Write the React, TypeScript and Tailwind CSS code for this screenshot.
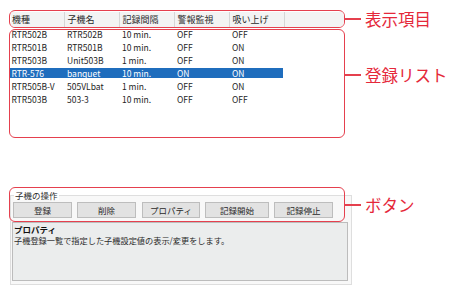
import React from "react";

const cols = ["機種", "子機名", "記録間隔", "警報監視", "吸い上げ"];
const rows = [
  ["RTR502B", "RTR502B", "10 min.", "OFF", "OFF"],
  ["RTR501B", "RTR501B", "10 min.", "OFF", "ON"],
  ["RTR503B", "Unit503B", "1 min.", "OFF", "ON"],
  ["RTR-576", "banquet", "10 min.", "ON", "ON"],
  ["RTR505B-V", "505VLbat", "1 min.", "OFF", "ON"],
  ["RTR503B", "503-3", "10 min.", "OFF", "OFF"],
];
const selected = 3;

const colCls = (i: number) =>
  i === 0 ? "w-[54px] pl-[1.5px]" : "w-[55px] pl-[3px]";

function Callout({ label }: { label: string }) {
  return (
    <div className="flex items-center h-[18px]">
      <div className="w-[16px] h-[1.5px] bg-[#e5404e]" />
      <span className="ml-[4px] text-[16.5px] leading-none text-[#e5283a] whitespace-nowrap">
        {label}
      </span>
    </div>
  );
}

const buttons: { label: string; cls: string }[] = [
  { label: "登録", cls: "w-[59px]" },
  { label: "削除", cls: "w-[59px] ml-[5px]" },
  { label: "プロパティ", cls: "w-[58px] ml-[6px]" },
  { label: "記録開始", cls: "w-[64px] ml-[5px]" },
  { label: "記録停止", cls: "w-[59px] ml-[5px]" },
];

export default function App() {
  return (
    <div className="relative w-[450px] h-[287px] bg-white overflow-hidden font-['Noto_Sans_CJK_JP',sans-serif] text-[#1e1e1e]">
      <div className="flex flex-col pl-[9px] pt-[10px]">
        {/* header */}
        <div className="flex items-center">
          <div className="w-[336px] h-[18px] border-[1.5px] border-[#e5404e] rounded-[6px] overflow-hidden p-[0.5px]">
            <div className="flex h-full w-[333px] bg-[#f3f3f3]">
              {cols.map((c, i) => (
                <div
                  key={c}
                  className={`${colCls(i)} shrink-0 border-r border-[#d6d6d6] flex items-center text-[9px] leading-none text-[#2a2a2a]`}
                >
                  {c}
                </div>
              ))}
              <div className="flex-1" />
            </div>
          </div>
          <Callout label="表示項目" />
        </div>

        {/* list */}
        <div className="flex items-start mt-[1px]">
          <div className="w-[336px] h-[109px] border-[1.5px] border-[#e5404e] rounded-[6px] overflow-hidden">
            <div className="flex flex-col gap-[3px] -mt-[1px]">
              {rows.map((r, ri) => (
                <div
                  key={ri}
                  className={`flex h-[10px] w-[273px] items-center ${
                    ri === selected ? "bg-[#1f6dbd] text-white" : ""
                  }`}
                >
                  {r.map((c, ci) => (
                    <div
                      key={ci}
                      className={`${colCls(ci)} shrink-0 text-[8.5px] leading-none whitespace-nowrap`}
                    >
                      {c}
                    </div>
                  ))}
                </div>
              ))}
            </div>
          </div>
          <div className="mt-[37px]">
            <Callout label="登録リスト" />
          </div>
        </div>

        {/* group box */}
        <div className="mt-[57px] ml-[1px] w-[342px] h-[90px] border border-[#dedede] bg-[#f8f8f8] flex flex-col">
          <div className="h-[10px] -mt-[6px] ml-[3px] px-[1px] w-fit bg-white text-[8.5px] leading-[10px] text-[#2a2a2a]">
            子機の操作
          </div>
          <div className="flex mt-[2px] ml-[2px]">
            {buttons.map((b) => (
              <div
                key={b.label}
                className={`${b.cls} h-[16px] shrink-0 bg-[#e2e2e2] border border-[#bdbdbd] flex items-center justify-center text-[8.5px] leading-none text-[#2a2a2a]`}
              >
                {b.label}
              </div>
            ))}
          </div>
          <div className="mt-[4px] ml-[1px] w-[336px] h-[59px] bg-[#ebeded] border border-[#bcbcbc] px-[1px] pt-[1px] flex flex-col">
            <div className="text-[8.5px] leading-[11px] font-bold text-[#111]">プロパティ</div>
            <div className="text-[8.2px] leading-[10px] text-[#2a2a2a] whitespace-nowrap">
              子機登録一覧で指定した子機設定値の表示/変更をします。
            </div>
          </div>
        </div>
      </div>

      {/* annotation overlay for the button group */}
      <div className="absolute left-[9px] top-[187px] w-[336px] h-[35px] border-[1.5px] border-[#e5404e] rounded-[6px]" />
      <div className="absolute left-[345px] top-[196px]">
        <Callout label="ボタン" />
      </div>
    </div>
  );
}
